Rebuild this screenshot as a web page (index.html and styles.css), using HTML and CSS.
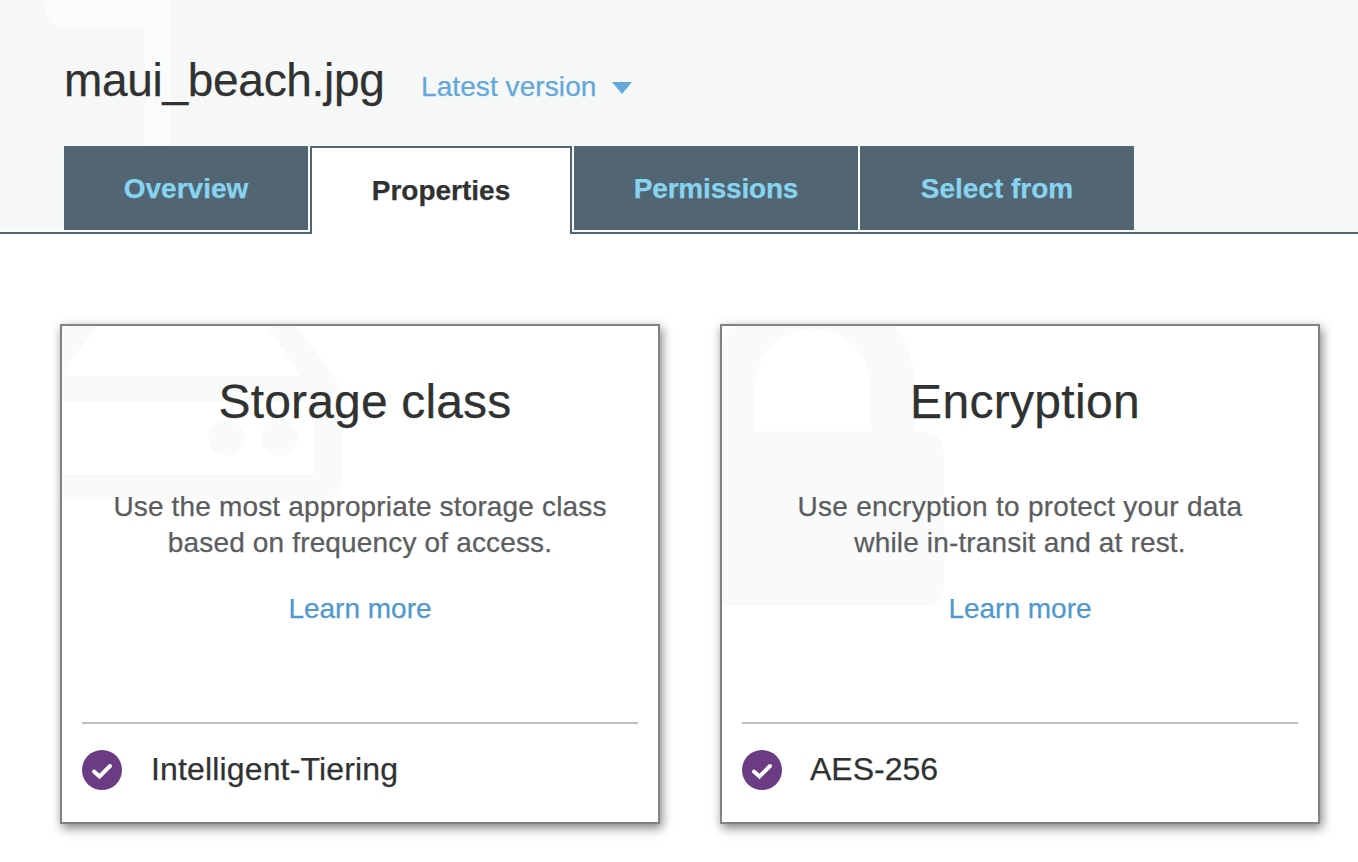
FILE: index.html
```html
<!DOCTYPE html>
<html lang="en">
<head>
<meta charset="utf-8">
<title>maui_beach.jpg</title>
<link rel="stylesheet" href="styles.css">
</head>
<body>
<header class="header">
  <svg class="header-art" width="172" height="232" viewBox="0 0 172 232" aria-hidden="true">
    <path d="M45 0v8q1 18 19 18h81v206h25V0h-24v1H70V0zM0 226h64v6H0z"/>
  </svg>
  <div class="title-row">
    <h1 class="title">maui_beach.jpg</h1>
    <a class="version"><span class="version-text">Latest version</span><svg class="caret" width="20" height="12" viewBox="0 0 20 12"><path d="M0 0h20L10 12z"/></svg></a>
  </div>
  <nav class="tabs">
    <a class="tab tab-overview">Overview</a>
    <a class="tab tab-properties active">Properties</a>
    <a class="tab tab-permissions">Permissions</a>
    <a class="tab tab-select">Select from</a>
  </nav>
</header>
<main class="cards">
  <section class="card">
    <svg class="card-art" width="290" height="290" viewBox="62 326 290 290" aria-hidden="true">
      <path fill-rule="evenodd" d="M62 326H298L334 377Q342 388 342 400V476Q342 500 318 500H62V474H315V402H62V376H300L267 326H97L62 376z"/>
      <circle cx="226.500" cy="438" r="18"/><circle cx="279.500" cy="438" r="18"/>
    </svg>
    <h2 class="card-title title-storage">Storage class</h2>
    <p class="desc">Use the most appropriate storage class<br>based on frequency of access.</p>
    <a class="learn">Learn more</a>
    <div class="status">
      <svg class="check" width="40" height="40" viewBox="0 0 40 40"><circle cx="20" cy="20" r="20"/><path d="M12 21.500l5.500 5L28 16"/></svg>
      <span class="status-text status-tiering">Intelligent-Tiering</span>
    </div>
  </section>
  <section class="card">
    <svg class="card-art" width="290" height="290" viewBox="722 326 290 290" aria-hidden="true">
      <path fill-rule="evenodd" d="M722 340Q726 332 732 326H895Q915 353 915 388V431H922Q944 432 944 454V584Q944 606 922 606H722zM755 431H871V386A58 56.500 0 0 0 755 386z"/>
    </svg>
    <h2 class="card-title title-encryption">Encryption</h2>
    <p class="desc desc-encryption">Use encryption to protect your data<br><span class="desc-tight">while in-transit and at rest.</span></p>
    <a class="learn">Learn more</a>
    <div class="status">
      <svg class="check" width="40" height="40" viewBox="0 0 40 40"><circle cx="20" cy="20" r="20"/><path d="M12 21.500l5.500 5L28 16"/></svg>
      <span class="status-text">AES-256</span>
    </div>
  </section>
</main>
</body>
</html>
```
FILE: styles.css
```css
* { box-sizing: border-box; }
body {
  margin: 0;
  height: 862px;
  overflow: hidden;
  background: #fff;
  color: #303232;
  font-family: "Liberation Sans", Helvetica, Arial, sans-serif;
  -webkit-text-stroke: 0.25px currentColor;
}
.header {
  position: relative;
  height: 234px;
  background: #f6f8f8;
  border-bottom: 2px solid #526572;
}
.header-art { position: absolute; left: 0; top: 0; fill: #fafcfb; }
.title-row {
  position: relative;
  display: flex;
  height: 146px;
  padding-left: 64px;
}
.title {
  width: 357px;
  margin: 0;
  padding-top: 54px;
  font-size: 46px;
  line-height: 52px;
  font-weight: 400;
  letter-spacing: -0.3px;
}
.version {
  display: flex;
  align-items: flex-start;
  padding-top: 71px;
  color: #64a8db;
  font-size: 28px;
  line-height: 32px;
}
.version-text { width: 191px; letter-spacing: 0.08px; }
.caret { margin-top: 11px; fill: #64a8db; }
.tabs {
  position: relative;
  display: flex;
  align-items: flex-start;
  gap: 2px;
  padding-left: 64px;
}
.tab {
  height: 84px;
  background: #526572;
  box-shadow: 0 0 0 2px #fafcfc;
  clip-path: inset(0 -2px -2px 0);
  color: #87d4f0;
  font-size: 28px;
  font-weight: 700;
  line-height: 85px;
  text-align: center;
}
.tab-overview { width: 244px; }
.tab-properties { width: 262px; }
.tab-permissions { width: 284px; letter-spacing: -0.2px; }
.tab-select { width: 274px; clip-path: inset(0 0 -2px 0); }
.tab.active {
  position: relative;
  height: 88px;
  border: 2px solid #526572;
  border-bottom: 0;
  border-radius: 0 0 2px 2px;
  box-shadow: none;
  clip-path: none;
  background: #fff;
  color: #303232;
}
.cards {
  display: flex;
  gap: 60px;
  padding: 90px 0 0 60px;
}
.card {
  position: relative;
  display: flex;
  flex-direction: column;
  width: 600px;
  height: 500px;
  padding: 0 20px;
  border: 2px solid #828282;
  background: #fff;
  box-shadow: 2px 4px 10px rgba(0, 0, 0, .5);
  text-align: center;
}
.card-art { position: absolute; left: 0; top: 0; fill: #f9fbfa; }
.card-title {
  position: relative;
  height: 60px;
  margin: 46px -10px 0 0;
  font-size: 48px;
  line-height: 60px;
  font-weight: 400;
}
.title-storage { letter-spacing: 0.15px; }
.title-encryption { letter-spacing: 0.3px; }
.desc {
  position: relative;
  margin: 57px -20px 0;
  color: #5b5d5e;
  font-size: 28px;
  line-height: 36px;
  letter-spacing: 0.16px;
}
.desc-encryption { letter-spacing: 0.26px; }
.desc-tight { letter-spacing: 0.16px; }
.learn {
  position: relative;
  margin-top: 30px;
  color: #4e99d0;
  font-size: 28px;
  line-height: 36px;
}
.status {
  display: flex;
  align-items: center;
  gap: 28px;
  height: 94px;
  margin-top: 95px;
  border-top: 2px solid #bdbdbd;
  font-size: 32px;
}
.status-text { padding-bottom: 2px; }
.status-tiering { padding-left: 1px; letter-spacing: 0.15px; }
.check circle { fill: #6b3c84; }
.check path { fill: none; stroke: #fff; stroke-width: 4; stroke-linecap: round; }
```
